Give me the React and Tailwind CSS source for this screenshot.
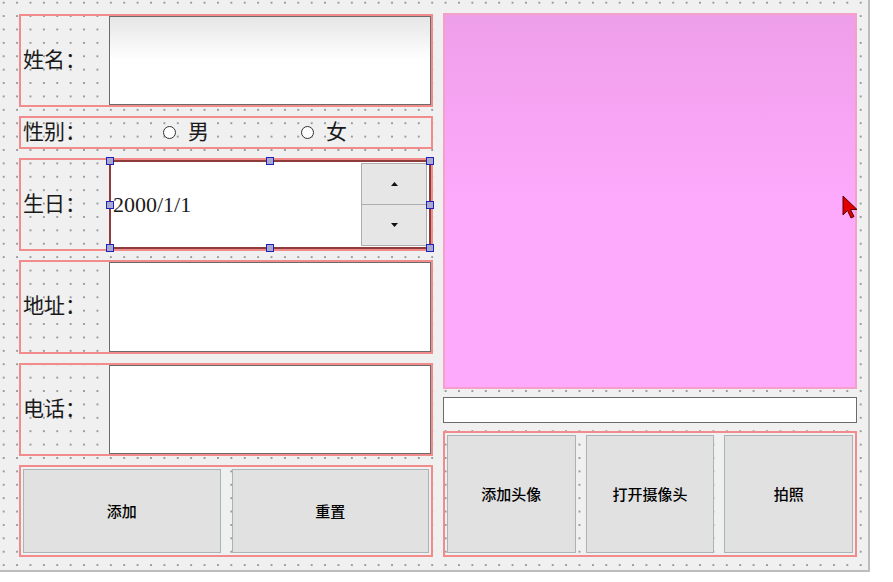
import React from 'react';

const dots =
  'bg-[#f0f0f0] bg-[radial-gradient(circle,#9a9a9a_0.8px,transparent_1.2px)] bg-[length:13.4px_13.4px] bg-[position:-3px_-4px]';

const labelFont = { fontFamily: '"Liberation Serif", "Noto Sans CJK SC", serif' };
const btnFont = { fontFamily: '"Noto Sans CJK SC", sans-serif' };

function Row({ label, height, children }) {
  return (
    <div className={`flex border-2 border-[#f28b8b] ${height}`}>
      <div className="flex w-[88px] shrink-0 items-center pl-[2px] text-[21px] text-[#1a1a1a]" style={labelFont}>
        {label}：
      </div>
      {children}
    </div>
  );
}

function TextBox({ className = '' }) {
  return <div className={`flex-1 border border-[#6b6b6b] bg-white ${className}`} />;
}

function Handle({ className }) {
  return <div className={`absolute h-[8px] w-[8px] border-[1.5px] border-[#2020c0] bg-[#a9a9c9] ${className}`} />;
}

function Button({ text, className = '' }) {
  return (
    <div
      className={`flex items-center justify-center border border-[#a9b3b8] bg-[#e1e1e1] text-[15px] font-medium text-black ${className}`}
      style={btnFont}
    >
      {text}
    </div>
  );
}

function Radio({ text }) {
  return (
    <span className="flex items-center gap-[12px] text-[21px] text-[#1a1a1a]" style={labelFont}>
      <span className="h-[13px] w-[13px] rounded-full border border-[#333] bg-white" />
      {text}
    </span>
  );
}

export default function App() {
  return (
    <div className="relative h-[582px] w-[893px] overflow-hidden bg-white">
      <div className={`flex h-[572px] w-[870px] gap-[10px] border-b-2 border-r-2 border-[#bdbdbd] pl-[19px] pt-[13px] ${dots}`}>
        {/* left column */}
        <div className="flex w-[414px] flex-col gap-[9px] pt-[1px]">
          <Row label="姓名" height="h-[93px]">
            <TextBox className="bg-gradient-to-b from-[#e6e6e6] via-white to-white" />
          </Row>
          <div className="flex h-[33px] items-center border-2 border-[#f28b8b]">
            <div className="w-[142px] pl-[2px] text-[21px] text-[#1a1a1a]" style={labelFont}>
              性别：
            </div>
            <Radio text="男" />
            <div className="w-[92px]" />
            <Radio text="女" />
          </div>
          <Row label="生日" height="h-[93px]">
            <div className="relative flex flex-1 items-center border-2 border-[#8e3b3b] bg-white">
              <span className="pl-[2px] text-[22px] text-[#1a1a1a]" style={labelFont}>
                2000/1/1
              </span>
              <div className="absolute bottom-[1px] right-[2px] top-[1px] flex w-[66px] flex-col">
                <div className="flex flex-1 items-center justify-center border border-[#adadad] bg-[#e6e6e6]">
                  <svg width="7" height="4" viewBox="0 0 7 4"><path d="M0 4 L3.5 0 L7 4Z" fill="#111" /></svg>
                </div>
                <div className="flex flex-1 items-center justify-center border border-t-0 border-[#adadad] bg-[#e6e6e6]">
                  <svg width="7" height="4" viewBox="0 0 7 4"><path d="M0 0 L3.5 4 L7 0Z" fill="#111" /></svg>
                </div>
              </div>
              <Handle className="-left-[5px] -top-[5px]" />
              <Handle className="left-1/2 -top-[5px] -translate-x-1/2" />
              <Handle className="-right-[5px] -top-[5px]" />
              <Handle className="-left-[5px] top-1/2 -translate-y-1/2" />
              <Handle className="-right-[5px] top-1/2 -translate-y-1/2" />
              <Handle className="-bottom-[5px] -left-[5px]" />
              <Handle className="-bottom-[5px] left-1/2 -translate-x-1/2" />
              <Handle className="-bottom-[5px] -right-[5px]" />
            </div>
          </Row>
          <Row label="地址" height="h-[94px]">
            <TextBox />
          </Row>
          <Row label="电话" height="h-[93px]">
            <TextBox />
          </Row>
          <div className="flex h-[92px] gap-[11px] border-2 border-[#f28b8b] p-[2px]">
            <Button text="添加" className="flex-1" />
            <Button text="重置" className="flex-1" />
          </div>
        </div>

        {/* right column */}
        <div className="flex w-[414px] flex-col">
          <div className="h-[376px] border-2 border-[#f4a0c8] bg-gradient-to-b from-[#ee9fe9] via-[#fda9fc] to-[#fda9fc]" />
          <div className="mt-[8px] h-[26px] border border-[#6b6b6b] bg-white" />
          <div className="mt-[8px] flex h-[126px] gap-[10px] border-2 border-[#f28b8b] p-[2px]">
            <Button text="添加头像" className="flex-1" />
            <Button text="打开摄像头" className="flex-1" />
            <Button text="拍照" className="flex-1" />
          </div>
        </div>
      </div>

      {/* mouse cursor */}
      <svg className="absolute left-[842px] top-[195px]" width="18" height="26" viewBox="0 0 18 26">
        <path d="M1 1 L1 20 L5.5 15.5 L9 23 L12 21.5 L8.5 14.5 L15 14.5 Z" fill="#e00000" stroke="#5a0000" strokeWidth="1" />
      </svg>
    </div>
  );
}
